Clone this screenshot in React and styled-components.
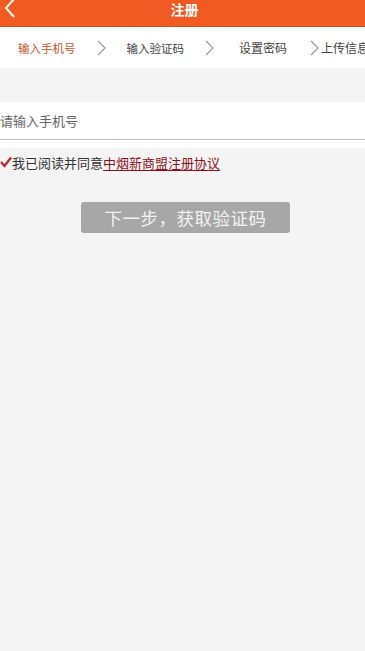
import React, { useState } from 'react';
import styled, { createGlobalStyle } from 'styled-components';

const GlobalStyle = createGlobalStyle`
  html, body {
    margin: 0;
    padding: 0;
    background: #f4f4f4;
    font-family: "Noto Sans CJK SC", "Liberation Sans", sans-serif;
  }
  * { box-sizing: border-box; }
`;

const Page = styled.div`
  width: 365px;
  min-height: 651px;
  background: #f4f4f4;
  overflow: hidden;
`;

const Header = styled.div`
  position: relative;
  height: 27px;
  background: #f15a22;
  border-bottom: 1px solid #dc4c18;
  display: flex;
  align-items: flex-start;
  justify-content: center;
`;

const BackButton = styled.button`
  position: absolute;
  left: 2px;
  top: -3px;
  width: 16px;
  height: 22px;
  padding: 0;
  border: none;
  background: none;
  display: flex;
  align-items: center;
  justify-content: center;
`;

const Title = styled.h1`
  margin: 0;
  margin-left: 4px;
  font-size: 14px;
  line-height: 18px;
  font-weight: 700;
  color: #fff;
`;

const Steps = styled.div`
  height: 41px;
  background: #fff;
  display: flex;
  align-items: center;
  padding-left: 18px;
  white-space: nowrap;
  overflow: hidden;
`;

const StepLabel = styled.span`
  font-size: ${p => (p.$small ? '11.5px' : '12px')};
  color: ${p => (p.$active ? '#c4562c' : '#444')};
  flex-shrink: 0;
`;

const Arrow = styled.span`
  display: flex;
  flex-shrink: 0;
  margin: 0 ${p => p.$right}px 0 ${p => p.$left}px;
`;

const InputBox = styled.div`
  margin-top: 34px;
  background: #fff;
  padding-bottom: 8px;
`;

const PhoneInput = styled.input`
  display: block;
  width: 100%;
  height: 38px;
  border: none;
  border-bottom: 1px solid #bdbdbd;
  padding: 0;
  font-family: inherit;
  font-size: 13px;
  color: #333;
  background: transparent;
  outline: none;

  &::placeholder {
    color: #666;
  }
`;

const Agree = styled.label`
  display: flex;
  align-items: center;
  height: 28px;
  font-size: 13px;
  color: #333;
`;

const Check = styled.span`
  display: flex;
  width: 12px;
  flex-shrink: 0;
`;

const Link = styled.a`
  color: #8e1020;
  text-decoration: underline;
  text-underline-offset: 2px;
`;

const ButtonRow = styled.div`
  display: flex;
  justify-content: center;
  padding: 26px 0 0 6px;
`;

const NextButton = styled.button`
  width: 209px;
  height: 31px;
  border: none;
  border-radius: 3px;
  background: #a7a7a7;
  color: #f2f2f2;
  font-family: inherit;
  font-size: 17.5px;
  letter-spacing: 0.5px;
  padding: 0;
`;

const Chevron = () => (
  <svg width="9" height="16" viewBox="0 0 9 16">
    <path d="M1 1 L8 8 L1 15" fill="none" stroke="#9a9a9a" strokeWidth="1.2" />
  </svg>
);

export default function App() {
  const [phone, setPhone] = useState('');

  return (
    <Page>
      <GlobalStyle />
      <Header>
        <BackButton aria-label="返回">
          <svg width="12" height="20" viewBox="0 0 12 20">
            <path d="M10 1 L2 10 L10 19" fill="none" stroke="#fff" strokeWidth="2" />
          </svg>
        </BackButton>
        <Title>注册</Title>
      </Header>

      <Steps>
        <StepLabel $active $small>输入手机号</StepLabel>
        <Arrow $left={21} $right={21}><Chevron /></Arrow>
        <StepLabel $small>输入验证码</StepLabel>
        <Arrow $left={21} $right={25}><Chevron /></Arrow>
        <StepLabel>设置密码</StepLabel>
        <Arrow $left={23} $right={2}><Chevron /></Arrow>
        <StepLabel>上传信息</StepLabel>
      </Steps>

      <InputBox>
        <PhoneInput
          type="tel"
          placeholder="请输入手机号"
          value={phone}
          onChange={e => setPhone(e.target.value)}
        />
      </InputBox>

      <Agree>
        <Check>
          <svg width="12" height="12" viewBox="0 0 12 12">
            <path d="M1 6 L4.5 10 L11 1.5" fill="none" stroke="#c0252f" strokeWidth="2.3" />
          </svg>
        </Check>
        我已阅读并同意<Link>中烟新商盟注册协议</Link>
      </Agree>

      <ButtonRow>
        <NextButton disabled>下一步，获取验证码</NextButton>
      </ButtonRow>
    </Page>
  );
}
